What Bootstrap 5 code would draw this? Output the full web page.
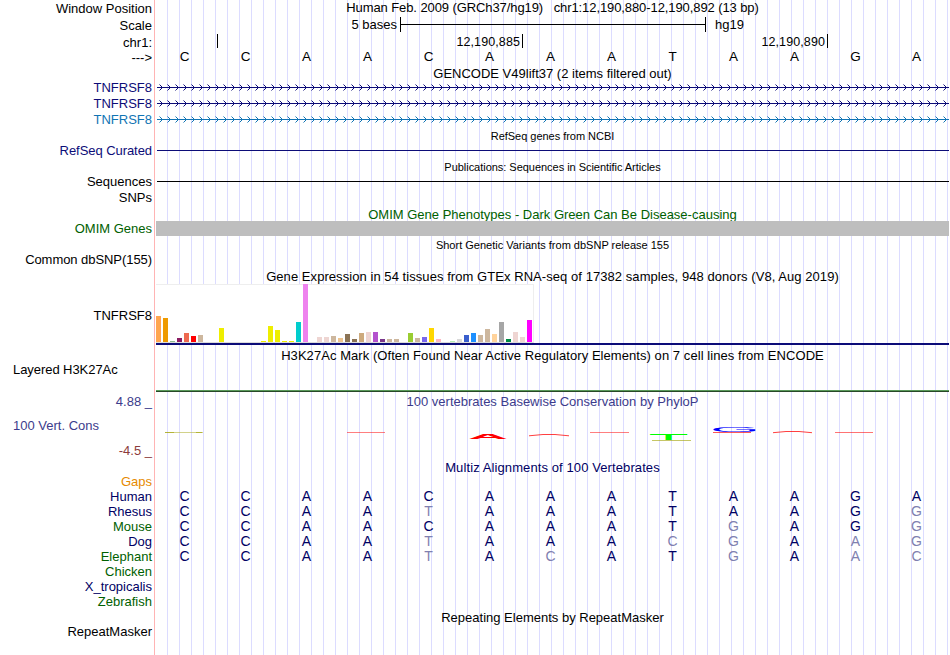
<!DOCTYPE html>
<html lang="en">
<head>
    <meta charset="UTF-8">
    <meta name="viewport" content="width=device-width, initial-scale=1.0">
    <title>Genome Browser - chr1:12,190,880-12,190,892</title>
    <link href="https://cdn.jsdelivr.net/npm/bootstrap@5.3.0/dist/css/bootstrap.min.css" rel="stylesheet">
    <style>
        body {
            font-family: "Liberation Sans", Arial, sans-serif;
            font-size: 13px;
            color: #000;
            background: #fff;
        }
        .browser {
            width: 949px;
            height: 655px;
            background:
                linear-gradient(#ffb4b4, #ffb4b4) 154px 0 / 1px 100% no-repeat,
                repeating-linear-gradient(to right, transparent 0 11px, #dcdcff 11px 12px) 156px 0 / 793px 100% no-repeat;
        }
        .track-row { height: 15px; line-height: 15px; }
        .h-16 { height: 16px; line-height: 16px; }
        .h-17 { height: 17px; line-height: 17px; }
        .h-18 { height: 18px; line-height: 18px; }
        .side { width: 156px; padding-right: 4px; }
        .side-left { padding-left: 13px; }
        .lane { width: 793px; }
        .lane svg { display: block; }
        .title { line-height: 17px; }
        .title-low { line-height: 20px; }
        .title-up { line-height: 15px; white-space: pre; }
        .small-title { font-size: 11px; }
        .tight { letter-spacing: -.09px; }
        .snug { letter-spacing: -.06px; }
        .wide { letter-spacing: .06px; }
        .wider { letter-spacing: .1px; }
        .narrow { letter-spacing: -.03px; }
        .navy { color: #0c0c78; }
        .sky { color: #1074b4; }
        .green { color: #006000; }
        .orange { color: #e68a00; }
        .align { color: #000064; }
        .cons { color: #3c3c8c; }
        .cons-neg { color: #8c3c3c; }
        .mismatch { color: #8080b0; }
        .bases { font-size: 14px; }
        .bases-top { font-size: 13.5px; line-height: 13px; }
        .base { width: 61px; padding-right: 4px; }
        .gray-bar { background: #bebebe; }
        .scale-label { width: 241px; margin-right: -1px; }
        .ruler-label { padding-right: 2px; line-height: 16px; font-size: 12.5px; letter-spacing: .1px; }
        .tick { width: 1px; height: 14px; background: #000; }
        .gtex { height: 62px; line-height: 21px; }
        .gtex-chart {
            width: 378px;
            height: 59px;
            gap: 2px;
            background: #fff;
            border-top: 1px solid #eee;
            border-right: 1px solid #eee;
            border-bottom: 1px solid #dcdcdc;
        }
        .gtex-chart div { width: 5px; }
        .gtex-line { height: 2px; background: #0c0c78; }
        .h3k { height: 28px; line-height: 11px; }
        .h3k-line { height: 2px; background: linear-gradient(#5a9a5a 50%, #284828 50%); }
        .phylo { height: 67px; }
        .phylo .side { line-height: 20px; }
        .phylo .side-left { padding-bottom: 3px; }
        .phylo .cons-neg { line-height: 16px; }
    </style>
</head>
<body>
    <div class="browser overflow-hidden text-nowrap">
        <!-- Position, scale and ruler -->
        <div class="track-row h-17 d-flex">
            <div class="side text-end">Window Position</div>
            <div class="lane text-center title-up tight">Human Feb. 2009 (GRCh37/hg19)   chr1:12,190,880-12,190,892 (13 bp)</div>
        </div>
        <div class="track-row h-17 d-flex">
            <div class="side text-end">Scale</div>
            <div class="lane title-up d-flex">
                <div class="scale-label text-end">5 bases</div>
                <svg class="ms-1" width="315" height="17">
                    <path d="M.5 0V15M0 7.500H305M305.500 0V15" stroke="#000"/>
                </svg>
                <div>hg19</div>
            </div>
        </div>
        <div class="track-row h-16 d-flex">
            <div class="side text-end title">chr1:</div>
            <div class="lane d-flex" id="ruler"></div>
        </div>
        <div class="track-row d-flex">
            <div class="side text-end">---&gt;</div>
            <div class="lane d-flex bases bases-top" data-seq="CCAACAAATAAGA"></div>
        </div>

        <!-- Genes -->
        <div class="track-row d-flex">
            <div class="side"></div>
            <div class="lane text-center title">GENCODE V49lift37 (2 items filtered out)</div>
        </div>
        <div class="track-row h-16 d-flex navy">
            <div class="side text-end">TNFRSF8</div>
            <div class="lane intron"></div>
        </div>
        <div class="track-row h-16 d-flex navy">
            <div class="side text-end">TNFRSF8</div>
            <div class="lane intron"></div>
        </div>
        <div class="track-row h-16 d-flex sky">
            <div class="side text-end">TNFRSF8</div>
            <div class="lane intron"></div>
        </div>
        <div class="track-row d-flex">
            <div class="side"></div>
            <div class="lane text-center title small-title narrow">RefSeq genes from NCBI</div>
        </div>
        <div class="track-row h-16 d-flex navy">
            <div class="side text-end snug">RefSeq Curated</div>
            <div class="lane"><svg width="793" height="16"><path d="M1 7.500H793" stroke="currentColor"/></svg></div>
        </div>
        <div class="track-row d-flex">
            <div class="side"></div>
            <div class="lane text-center title small-title narrow">Publications: Sequences in Scientific Articles</div>
        </div>
        <div class="track-row h-16 d-flex">
            <div class="side text-end">Sequences</div>
            <div class="lane"><svg width="793" height="16"><path d="M1 7.500H793" stroke="currentColor"/></svg></div>
        </div>
        <div class="track-row h-16 d-flex">
            <div class="side text-end">SNPs</div>
        </div>

        <!-- Variants -->
        <div class="track-row d-flex green overflow-hidden">
            <div class="side"></div>
            <div class="lane text-center title">OMIM Gene Phenotypes - Dark Green Can Be Disease-causing</div>
        </div>
        <div class="track-row d-flex green">
            <div class="side text-end">OMIM Genes</div>
            <div class="lane gray-bar"></div>
        </div>
        <div class="track-row h-16 d-flex">
            <div class="side"></div>
            <div class="lane text-center h-18 small-title">Short Genetic Variants from dbSNP release 155</div>
        </div>
        <div class="track-row h-16 d-flex">
            <div class="side text-end snug">Common dbSNP(155)</div>
        </div>

        <!-- Expression -->
        <div class="track-row h-16 d-flex">
            <div class="side"></div>
            <div class="lane text-center h-18 wide">Gene Expression in 54 tissues from GTEx RNA-seq of 17382 samples, 948 donors (V8, Aug 2019)</div>
        </div>
        <div class="gtex d-flex">
            <div class="side text-end align-self-center">TNFRSF8</div>
            <div class="lane">
                <div class="gtex-chart d-flex align-items-end" id="gtex"></div>
                <div class="gtex-line"></div>
            </div>
        </div>
        <div class="track-row h-18 d-flex">
            <div class="side"></div>
            <div class="lane text-center title-low wide">H3K27Ac Mark (Often Found Near Active Regulatory Elements) on 7 cell lines from ENCODE</div>
        </div>
        <div class="h3k d-flex">
            <div class="side side-left snug">Layered H3K27Ac</div>
            <div class="lane d-flex flex-column justify-content-end"><div class="h3k-line"></div></div>
        </div>

        <!-- Conservation -->
        <div class="phylo d-flex cons">
            <div class="side d-flex flex-column justify-content-between">
                <div class="text-end">4.88 _</div>
                <div class="side-left">100 Vert. Cons</div>
                <div class="text-end cons-neg">-4.5 _</div>
            </div>
            <div class="lane">
                <div class="h-18 title-low text-center">100 vertebrates Basewise Conservation by PhyloP</div>
                <svg id="phylop" width="793" height="49" font-size="100"></svg>
            </div>
        </div>
        <div class="track-row d-flex align">
            <div class="side"></div>
            <div class="lane text-center title wider">Multiz Alignments of 100 Vertebrates</div>
        </div>
        <div class="track-row d-flex orange">
            <div class="side text-end">Gaps</div>
        </div>
        <div class="track-row d-flex align">
            <div class="side text-end">Human</div>
            <div class="lane d-flex bases" data-seq="CCAACAAATAAGA"></div>
        </div>
        <div class="track-row d-flex align">
            <div class="side text-end">Rhesus</div>
            <div class="lane d-flex bases" data-seq="CCAAtAAATAAGg"></div>
        </div>
        <div class="track-row d-flex align">
            <div class="side text-end green">Mouse</div>
            <div class="lane d-flex bases" data-seq="CCAACAAATgAGg"></div>
        </div>
        <div class="track-row d-flex align">
            <div class="side text-end">Dog</div>
            <div class="lane d-flex bases" data-seq="CCAAtAAAcgAag"></div>
        </div>
        <div class="track-row d-flex align">
            <div class="side text-end green">Elephant</div>
            <div class="lane d-flex bases" data-seq="CCAAtAcATgAac"></div>
        </div>
        <div class="track-row d-flex green">
            <div class="side text-end">Chicken</div>
        </div>
        <div class="track-row d-flex align">
            <div class="side text-end">X_tropicalis</div>
        </div>
        <div class="track-row d-flex green">
            <div class="side text-end">Zebrafish</div>
        </div>
        <div class="track-row d-flex">
            <div class="side"></div>
            <div class="lane text-center title">Repeating Elements by RepeatMasker</div>
        </div>
        <div class="track-row d-flex">
            <div class="side text-end">RepeatMasker</div>
        </div>
    </div>

    <script src="https://cdn.jsdelivr.net/npm/bootstrap@5.3.0/dist/js/bootstrap.bundle.min.js"></script>
    <script>
        // lower case marks a base that differs from human
        document.querySelectorAll('.bases').forEach(function(lane) {
            lane.innerHTML = lane.dataset.seq.split('').map(function(b) {
                const cls = b === b.toLowerCase() ? ' mismatch' : '';
                return `<div class="base text-center${cls}">${b.toUpperCase()}</div>`;
            }).join('');
        });

        // ruler ticks: label and width of the segment that ends in the tick
        document.getElementById('ruler').innerHTML = [['', 62], ['12,190,885', 305], ['12,190,890', 305]].map(function(t) {
            return `<div class="d-flex justify-content-end" style="width: ${t[1]}px"><span class="ruler-label">${t[0]}</span><div class="tick"></div></div>`;
        }).join('');

        // strand arrows every 8px
        document.querySelectorAll('.intron').forEach(function(lane) {
            let d = 'M1 7.500H793';
            for (let x = 3; x < 790; x += 8) {
                d += `M${x + .5} 4.500L${x + 3.5} 7.500L${x + .5} 10.500`;
            }
            lane.innerHTML = `<svg width="793" height="16"><path d="${d}" fill="none" stroke="currentColor"/></svg>`;
        });

        const tissues = [
            ['#ffa54f', 26], ['#ee9a00', 24], ['#8fbc8f', 1], ['#8b1c62', 4], ['#ee6a50', 9], ['#ff0000', 6],
            ['#cdb79e', 7], ['#eeee00', 0], ['#eeee00', 0], ['#eeee00', 14], ['#eeee00', 0], ['#eeee00', 0],
            ['#eeee00', 0], ['#eeee00', 0], ['#eeee00', 0], ['#eeee00', 1], ['#eeee00', 16], ['#eeee00', 12],
            ['#eeee00', 1], ['#eeee00', 1], ['#00cdcd', 20], ['#ee82ee', 58], ['#9ac0cd', 0], ['#eed5d2', 5],
            ['#eed5d2', 5], ['#cdb79e', 6], ['#eec591', 4], ['#8b7355', 8], ['#8b7355', 3], ['#cdaa7d', 9],
            ['#eed5d2', 10], ['#b452cd', 10], ['#7a378b', 3], ['#cdb79e', 3], ['#cdb79e', 3], ['#cdb79e', 0],
            ['#9acd32', 9], ['#cdb79e', 4], ['#7a67ee', 5], ['#ffd700', 14], ['#ffb6c1', 3], ['#cd9b1d', 0],
            ['#b4eeb4', 1], ['#d9d9d9', 3], ['#3a5fcd', 7], ['#1e90ff', 9], ['#cdb79e', 7], ['#cdb79e', 13],
            ['#ffd39b', 8], ['#a6a6a6', 20], ['#008b45', 3], ['#eed5d2', 10], ['#eed5d2', 5], ['#ff00ff', 22]
        ];
        document.getElementById('gtex').innerHTML = tissues.map(function(t) {
            return `<div style="height: ${t[1]}px; background: ${t[0]}"></div>`;
        }).join('');

        // tall logo letters: letter, left, baseline, x scale, y scale, weight, colour
        const letters = [
            ['A', 312, 28.8, .555, .068, 700, '#f00'],
            ['T', 492.500, 30, .66, .095, 400, '#0f0'],
            ['G', 554, 22, .64, .064, 400, '#00f']
        ];
        // scores near zero collapse to a thin stroke
        const slivers = [
            ['M9 22.500H47', '#b4b43c', .6], ['M9 22.500H18M40 22.500H46', '#a0a000', .6],
            ['M191 22.500H229', '#f00', .5],
            ['M373 25.800L387 24.500H399L413 25.800', '#f00', .75],
            ['M434 22.500H473', '#f00', .5],
            ['M494.500 24.500H531', '#0f0', 1],
            ['M496 30.500H535', '#a0a000', .6],
            ['M557 22.500H595', '#f00', .65],
            ['M617 22.700L630 21.500H643L656 22.700', '#f00', .75],
            ['M679 22.500H717', '#f00', .55]
        ];
        document.getElementById('phylop').innerHTML = slivers.map(function(s) {
            return `<path d="${s[0]}" fill="none" stroke="${s[1]}" stroke-opacity="${s[2]}"/>`;
        }).join('') + letters.map(function(l) {
            return `<text transform="translate(${l[1]} ${l[2]}) scale(${l[3]} ${l[4]})" font-weight="${l[5]}" fill="${l[6]}">${l[0]}</text>`;
        }).join('');
    </script>
</body>
</html>
